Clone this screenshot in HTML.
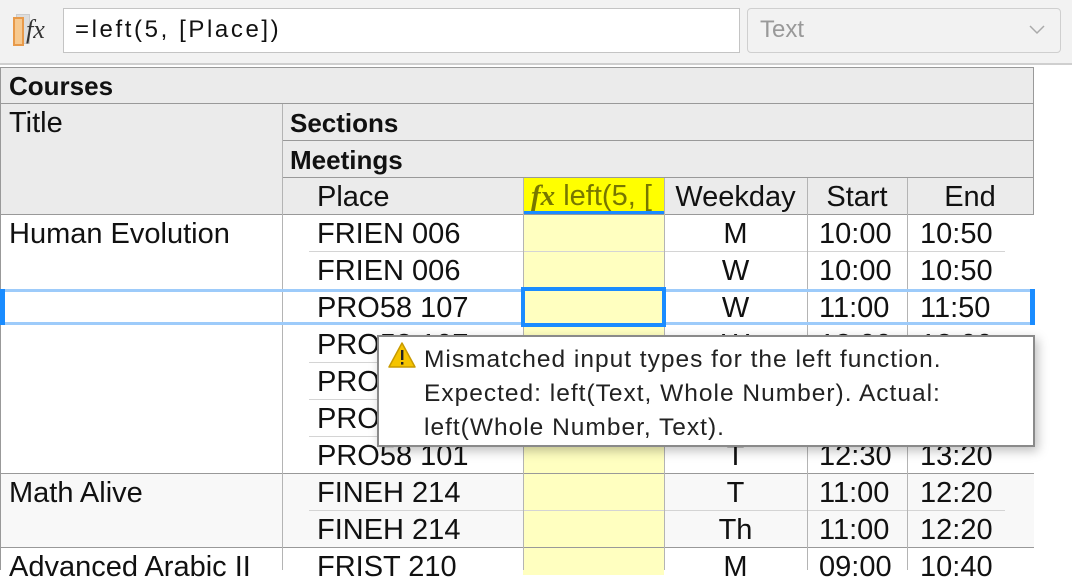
<!DOCTYPE html>
<html><head><meta charset="utf-8"><style>
*{margin:0;padding:0;box-sizing:border-box}
body{width:1072px;height:570px;overflow:hidden;background:#fff;font-family:"Liberation Sans",sans-serif;position:relative;color:#111}
.a{position:absolute}
.t{position:absolute;font-size:29px;line-height:39px;height:37px;white-space:nowrap}
.b{font-weight:bold;font-size:26px;line-height:37px}
.hl{position:absolute;height:1px;background:#999}
.rl{position:absolute;height:1px;background:#d4d4d4}
.vl{position:absolute;width:1px;background:#b4b4b4}
.c{text-align:center}
</style></head><body>
<!-- toolbar -->
<div class="a" style="left:0;top:0;width:1072px;height:65px;background:#f2f2f2;border-bottom:2px solid #cfcfcf"></div>
<div class="a" style="left:16px;top:14px;width:14px;height:30px;background:#ddd;border:1px solid #ccc"></div>
<div class="a" style="left:13px;top:17px;width:11px;height:29px;background:#f7c98f;border:2px solid #e89a4a"></div>
<div class="a" style="left:26px;top:15px;font-family:'Liberation Serif',serif;font-style:italic;font-size:26px;color:#333">fx</div>
<div class="a" style="left:63px;top:8px;width:677px;height:45px;background:#fff;border:1px solid #c4c4c4"></div>
<div class="a" style="left:75px;top:16px;font-size:24px;color:#111;letter-spacing:2.6px">=left(5, [Place])</div>
<div class="a" style="left:747px;top:8px;width:314px;height:45px;background:#f2f2f2;border:1px solid #cfcfcf;border-radius:4px"></div>
<div class="a" style="left:760px;top:16px;font-size:24px;color:#999">Text</div>
<svg class="a" style="left:1028px;top:24px" width="18" height="12"><path d="M2 2 L9 9 L16 2" fill="none" stroke="#aaa" stroke-width="1.5"/></svg>

<!-- header bg -->
<div class="a" style="left:0;top:67px;width:1034px;height:147px;background:#ebebeb;border-left:1px solid #999;border-right:1px solid #999"></div>
<div class="hl" style="left:0;top:67px;width:1034px"></div>
<div class="hl" style="left:0;top:103px;width:1034px"></div>
<div class="hl" style="left:282px;top:140px;width:752px"></div>
<div class="hl" style="left:282px;top:177px;width:752px"></div>
<div class="hl" style="left:0;top:214px;width:1034px"></div>
<div class="t b" style="left:9px;top:68px">Courses</div>
<div class="t" style="left:9px;top:104px">Title</div>
<div class="t b" style="left:290px;top:105px">Sections</div>
<div class="t b" style="left:290px;top:142px">Meetings</div>
<div class="t" style="left:317px;top:178px">Place</div>
<div class="a" style="left:523px;top:178px;width:141px;height:36px;background:#ffff00;border-bottom:3px solid #1a8cff;overflow:hidden">
 <span style="position:absolute;left:8px;top:1px;font-size:29px;line-height:35px;color:#777700;white-space:nowrap"><i style="font-family:'Liberation Serif',serif;font-weight:bold">fx</i> left(5, [</span></div>
<div class="t c" style="left:664px;top:178px;width:143px">Weekday</div>
<div class="t c" style="left:807px;top:178px;width:100px">Start</div>
<div class="t c" style="left:907px;top:178px;width:126px">End</div>

<!-- body backgrounds -->
<div class="a" style="left:523px;top:215px;width:141px;height:360px;background:#ffffc0"></div>
<div class="a" style="left:0;top:474px;width:523px;height:73px;background:#f8f8f8"></div>
<div class="a" style="left:664px;top:474px;width:370px;height:73px;background:#f8f8f8"></div>
<div class="a" style="left:0;top:214px;width:1px;height:356px;background:#999"></div>

<!-- row lines -->
<div class="rl" style="left:309px;top:251px;width:696px"></div>
<div class="rl" style="left:309px;top:362px;width:696px"></div>
<div class="rl" style="left:309px;top:399px;width:696px"></div>
<div class="rl" style="left:309px;top:436px;width:696px"></div>
<div class="rl" style="left:309px;top:510px;width:696px"></div>
<div class="hl" style="left:0;top:473px;width:1034px"></div>
<div class="hl" style="left:0;top:547px;width:1034px"></div>

<!-- verticals -->
<div class="vl" style="left:282px;top:104px;height:466px"></div>
<div class="vl" style="left:523px;top:178px;height:392px"></div>
<div class="vl" style="left:664px;top:178px;height:392px"></div>
<div class="vl" style="left:807px;top:178px;height:392px"></div>
<div class="vl" style="left:907px;top:178px;height:392px"></div>

<!-- data -->
<div class="t" style="left:9px;top:215px">Human Evolution</div>
<div class="t" style="left:9px;top:474px">Math Alive</div>
<div class="t" style="left:9px;top:548px">Advanced Arabic II</div>

<div class="t" style="left:317px;top:215px">FRIEN 006</div>
<div class="t" style="left:317px;top:252px">FRIEN 006</div>
<div class="t" style="left:317px;top:289px">PRO58 107</div>
<div class="t" style="left:317px;top:326px">PRO58 107</div>
<div class="t" style="left:317px;top:363px">PRO58 107</div>
<div class="t" style="left:317px;top:400px">PRO58 107</div>
<div class="t" style="left:317px;top:437px">PRO58 101</div>
<div class="t" style="left:317px;top:474px">FINEH 214</div>
<div class="t" style="left:317px;top:511px">FINEH 214</div>
<div class="t" style="left:317px;top:548px">FRIST 210</div>

<div class="t c" style="left:664px;top:215px;width:143px">M</div>
<div class="t c" style="left:664px;top:252px;width:143px">W</div>
<div class="t c" style="left:664px;top:289px;width:143px">W</div>
<div class="t c" style="left:664px;top:326px;width:143px">W</div>
<div class="t c" style="left:664px;top:437px;width:143px">T</div>
<div class="t c" style="left:664px;top:474px;width:143px">T</div>
<div class="t c" style="left:664px;top:511px;width:143px">Th</div>
<div class="t c" style="left:664px;top:548px;width:143px">M</div>

<div class="t" style="left:819px;top:215px">10:00</div><div class="t" style="left:920px;top:215px">10:50</div>
<div class="t" style="left:819px;top:252px">10:00</div><div class="t" style="left:920px;top:252px">10:50</div>
<div class="t" style="left:819px;top:289px">11:00</div><div class="t" style="left:920px;top:289px">11:50</div>
<div class="t" style="left:819px;top:326px">12:00</div><div class="t" style="left:920px;top:326px">12:00</div>
<div class="t" style="left:819px;top:437px">12:30</div><div class="t" style="left:920px;top:437px">13:20</div>
<div class="t" style="left:819px;top:474px">11:00</div><div class="t" style="left:920px;top:474px">12:20</div>
<div class="t" style="left:819px;top:511px">11:00</div><div class="t" style="left:920px;top:511px">12:20</div>
<div class="t" style="left:819px;top:548px">09:00</div><div class="t" style="left:920px;top:548px">10:40</div>

<!-- selection -->
<div class="a" style="left:0;top:289px;width:1034px;height:3px;background:#9dcbfa"></div>
<div class="a" style="left:0;top:322px;width:1034px;height:3px;background:#9dcbfa"></div>
<div class="a" style="left:0;top:289px;width:5px;height:36px;background:#1a8cff"></div>
<div class="a" style="left:1030px;top:289px;width:5px;height:36px;background:#1a8cff"></div>
<div class="a" style="left:521px;top:287px;width:145px;height:40px;border:4px solid #1a8cff;background:#ffffc0"></div>

<!-- tooltip -->
<div class="a" style="left:377px;top:335px;width:658px;height:112px;background:#fff;border:2px solid #8a8a8a;box-shadow:3px 4px 10px rgba(0,0,0,0.25)"></div>
<svg class="a" style="left:387px;top:341px" width="30" height="28"><path d="M15 2 L28 26 L2 26 Z" fill="#f5c400" stroke="#c89a00" stroke-width="1.5" stroke-linejoin="round"/><rect x="14" y="9" width="2.4" height="10" fill="#222"/><rect x="14" y="21" width="2.4" height="2.6" fill="#222"/></svg>
<div class="a" style="left:424px;top:343px;font-size:24.5px;line-height:34px;color:#222;white-space:nowrap;letter-spacing:1px">Mismatched input types for the left function.<br>Expected: left(Text, Whole Number). Actual:<br>left(Whole Number, Text).</div>
</body></html>
